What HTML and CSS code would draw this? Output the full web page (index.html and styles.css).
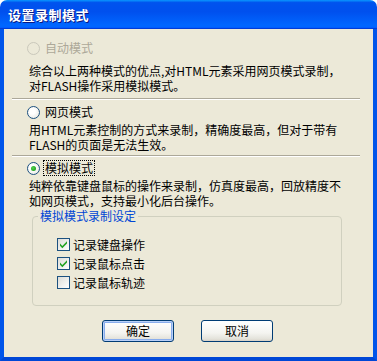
FILE: index.html
```html
<!DOCTYPE html>
<html>
<head>
<meta charset="utf-8">
<link rel="stylesheet" href="styles.css">
</head>
<body>
<div class="window">
  <div class="titlebar"><span class="title">设置录制模式</span></div>
  <div class="client">
    <div class="section first">
      <div class="opt disabled"><span class="radio"></span><span class="label">自动模式</span></div>
      <div class="desc d1">综合以上两种模式的优点,对HTML元素采用网页模式录制，<br>对FLASH操作采用模拟模式。</div>
    </div>
    <div class="sep s1"></div>
    <div class="section">
      <div class="opt"><span class="radio"></span><span class="label">网页模式</span></div>
      <div class="desc">用HTML元素控制的方式来录制，精确度最高，但对于带有<br>FLASH的页面是无法生效。</div>
    </div>
    <div class="sep s2"></div>
    <div class="section">
      <div class="opt"><span class="radio checked"></span><span class="label focus">模拟模式</span></div>
      <div class="desc">纯粹依靠键盘鼠标的操作来录制，仿真度最高，回放精度不<br>如网页模式，支持最小化后台操作。</div>
    </div>
    <fieldset class="group">
      <legend class="legend">模拟模式录制设定</legend>
      <div class="chk"><span class="box"><svg viewBox="0 0 13 13" width="13" height="13"><path d="M3 5.5 L5.3 8 L10 3.2 L10 5.4 L5.3 10.2 L3 7.7 Z" fill="#21A121"/></svg></span><span>记录键盘操作</span></div>
      <div class="chk"><span class="box"><svg viewBox="0 0 13 13" width="13" height="13"><path d="M3 5.5 L5.3 8 L10 3.2 L10 5.4 L5.3 10.2 L3 7.7 Z" fill="#21A121"/></svg></span><span>记录鼠标点击</span></div>
      <div class="chk"><span class="box"></span><span>记录鼠标轨迹</span></div>
    </fieldset>
    <div class="buttons">
      <button class="btn default">确定</button>
      <button class="btn">取消</button>
    </div>
  </div>
</div>
</body>
</html>
```
FILE: styles.css
```css
html, body {
  margin: 0;
  padding: 0;
  background: #ffffff;
}
.window {
  width: 377px;
  height: 361px;
  display: flex;
  flex-direction: column;
  font-family: "Noto Sans CJK SC", sans-serif;
  font-size: 12px;
  color: #000;
  box-sizing: border-box;
}
.titlebar {
  height: 29px;
  flex: none;
  border-radius: 7px 7px 0 0;
  background: linear-gradient(to bottom, #0997ff 0%, #0053ee 9%, #0050ee 40%, #0066ff 86%, #0066ff 92%, #005bff 95%, #003dd7 97%, #003dd7 100%);
  display: flex;
  align-items: center;
  padding-left: 8px;
  box-sizing: border-box;
}
.title {
  color: #fff;
  font-weight: bold;
  font-size: 13px;
  line-height: 16px;
  text-shadow: 1px 1px 0 #0a1883;
  letter-spacing: 0.5px;
  padding-top: 1px;
}
.client {
  flex: 1;
  min-height: 0;
  background: #ece9d8;
  border-left: 4px solid #0055ea;
  border-right: 4px solid #0055ea;
  border-bottom: 4px solid #0047d6;
  display: flex;
  flex-direction: column;
}
.section {
  padding-left: 22px;
}
.section.first {
  padding-top: 11px;
}
.opt {
  display: flex;
  align-items: center;
  height: 16px;
  padding-left: 1px;
  margin-top: 3px;
}
.section.first .opt {
  margin-top: 0;
}
.radio {
  width: 13px;
  height: 13px;
  border-radius: 50%;
  border: 1px solid #1c5180;
  box-sizing: border-box;
  background: radial-gradient(circle at 40% 40%, #ffffff 30%, #e2e2da 100%);
  position: relative;
  flex: none;
}
.radio.checked::after {
  content: "";
  position: absolute;
  left: 3px;
  top: 3px;
  width: 5px;
  height: 5px;
  border-radius: 50%;
  background: radial-gradient(circle at 40% 40%, #55d551 0%, #21a121 70%);
}
.opt.disabled .radio {
  border-color: #cac8bb;
  background: #ece9d8;
}
.opt.disabled .label {
  color: #aca899;
}
.label {
  margin-left: 3px;
  height: 14px;
  line-height: 14px;
  padding: 0 1px;
  border: 1px solid transparent;
}
.label.focus {
  border: 1px dotted #000;
}
.desc {
  margin-top: 2px;
  height: 30px;
  line-height: 15px;
  padding-left: 3px;
}
.desc.d1 {
  margin-top: 7px;
}
.sep {
  height: 0;
  border-top: 1px solid #aca899;
  border-bottom: 1px solid #ffffff;
  margin: 3px 13px 0 8px;
}
.sep.s1 {
  margin-top: 5px;
  margin-bottom: 1px;
}
.group {
  margin: 1px 31px 0 28px;
  padding: 12px 0 13px 0;
  border: 1px solid #d0d0bf;
  border-radius: 4px;
  min-width: 0;
}
.legend {
  color: #0046d5;
  padding: 0 2px;
  margin-left: 5px;
  height: 14px;
  line-height: 14px;
}
.chk {
  display: flex;
  align-items: center;
  height: 19px;
  padding-left: 24px;
}
.box {
  width: 13px;
  height: 13px;
  box-sizing: border-box;
  border: 1px solid #1c5180;
  background: linear-gradient(135deg, #dcdcd7 0%, #ffffff 100%);
  margin-right: 3px;
  position: relative;
  flex: none;
}
.box svg {
  position: absolute;
  left: -1px;
  top: -1px;
}
.buttons {
  display: flex;
  gap: 27px;
  padding-left: 98px;
  margin-top: 14px;
}
.btn {
  width: 72px;
  height: 22px;
  font-family: "Noto Sans CJK SC", sans-serif;
  font-size: 12px;
  color: #000;
  border: 1px solid #003c74;
  border-radius: 3px;
  background: linear-gradient(to bottom, #ffffff 0%, #f4f4f0 60%, #e3e2da 90%, #d6d0c5 100%);
  padding: 0;
  line-height: 18px;
}
.btn.default {
  box-shadow: inset 0 0 0 1px #b8d0f8, inset 0 0 0 2px #89adec;
}
```
